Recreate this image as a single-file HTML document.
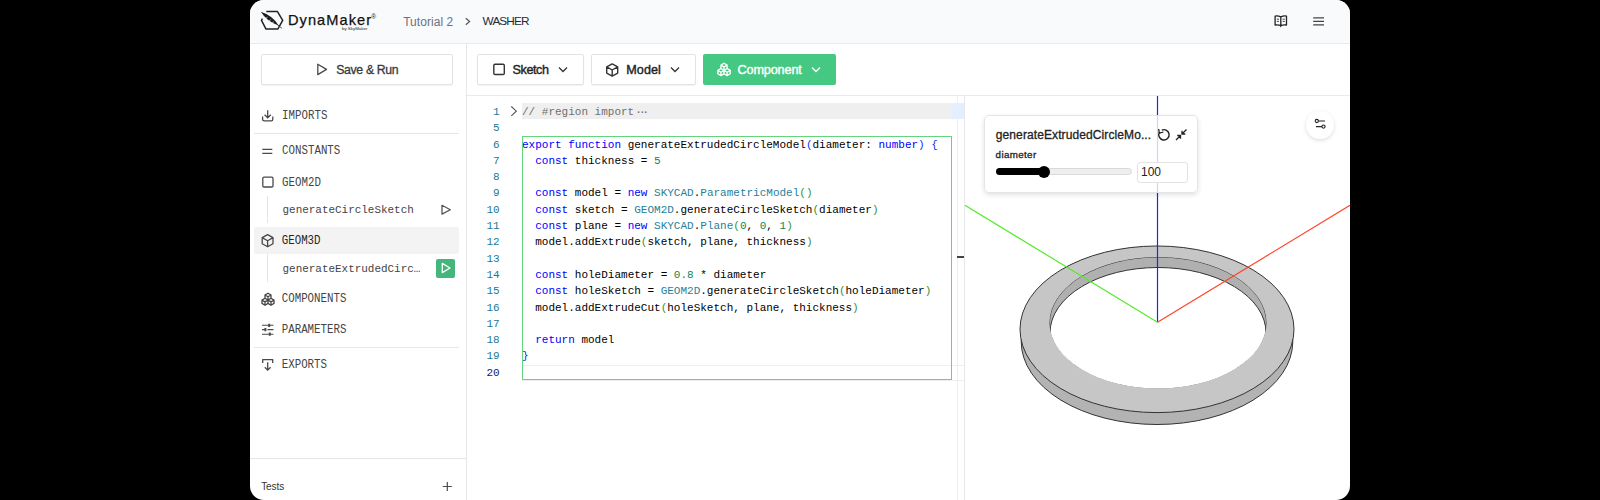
<!DOCTYPE html>
<html><head><meta charset="utf-8">
<style>
*{box-sizing:border-box;margin:0;padding:0}
html,body{width:1600px;height:500px;overflow:hidden;background:#000}
body{font-family:"Liberation Sans",sans-serif;position:relative}
.a{position:absolute;white-space:pre}
#win{position:absolute;left:250px;top:0;width:1100px;height:500px;border-radius:14px;overflow:hidden;background:#fff}
#c{position:absolute;left:-250px;top:0;width:1600px;height:500px}
.k{color:#0000ff}.t{color:#267f99}.n{color:#098658}.b1{color:#0431fa}.b2{color:#319331}
</style></head><body>
<div id="win"><div id="c">
<div class="a" style="left:250px;top:0px;width:1100px;height:43px;background:#f9fafb"></div>
<div class="a" style="left:250px;top:43px;width:1100px;height:1px;background:#e8eaed"></div>
<svg class="a" style="left:258px;top:8px;" width="28" height="25" viewBox="258 8 28 25">
<path d="M262.4 18.6 L261.5 20.3 L266 29.1 L277.8 29.1 L282.7 20.3 L277.5 11.6 L266.3 11.6" fill="none" stroke="#222" stroke-width="1.5" stroke-linejoin="round"/>
<path d="M260.8 11.8 Q272.3 15.4 278.6 25.4 Q267.2 22 260.8 11.8 Z" fill="#1e1e1e"/>
<path d="M277 24.2 L281.8 28.3" stroke="#333" stroke-width="0.9"/>
<path d="M265.6 18.4 L267.6 17.2 M268.8 20.9 L270.8 19.6 M272 23 L274 21.7" stroke="#f9fafb" stroke-width="0.6"/>
</svg>
<div class="a" style="left:288px;top:12.89px;font-family:'Liberation Sans',sans-serif;font-size:14.6px;line-height:14.6px;color:#111;font-weight:normal;letter-spacing:1.05px;-webkit-text-stroke:0.25px #111;">DynaMaker</div>
<div class="a" style="left:371.3px;top:13.68px;font-family:'Liberation Sans',sans-serif;font-size:6.5px;line-height:6.5px;color:#222;font-weight:normal;letter-spacing:0px;">®</div>
<div class="a" style="left:342px;top:27.06px;font-family:'Liberation Sans',sans-serif;font-size:4.4px;line-height:4.4px;color:#222;font-weight:normal;letter-spacing:0px;">by SkyMaker</div>
<div class="a" style="left:403.2px;top:15.80px;font-family:'Liberation Sans',sans-serif;font-size:12px;line-height:12px;color:#6b7280;font-weight:normal;letter-spacing:0.05px;">Tutorial 2</div>
<svg class="a" style="left:462px;top:15px;" width="12" height="13" viewBox="462 15 12 13"><path d="M465.8 18.3 L469.6 21.5 L465.8 24.7" fill="none" stroke="#555" stroke-width="1.2"/></svg>
<div class="a" style="left:482.6px;top:15.07px;font-family:'Liberation Sans',sans-serif;font-size:11.8px;line-height:11.8px;color:#1f2937;font-weight:normal;letter-spacing:-0.9px;padding-top:0.5px;">WASHER</div>
<svg class="a" style="left:1270px;top:12px;" width="22" height="18" viewBox="1270 12 22 18">
<path d="M1280.8 16.9 Q1278 15.6 1275.1 16.1 V25 Q1278 24.6 1280.8 25.4 Q1283.6 24.6 1286.5 25 V16.1 Q1283.6 15.6 1280.8 16.9 Z M1280.8 16.9 V25.4" fill="none" stroke="#222" stroke-width="1.3" stroke-linejoin="round"/>
<path d="M1276.8 19.2h2.2M1276.8 21.4h2.2M1282.6 19.2h2.2M1282.6 21.4h2.2" stroke="#333" stroke-width="0.9"/>
<path d="M1279.6 25.2 L1280.8 27.6 L1282 25.2 Z" fill="#222"/>
</svg>
<svg class="a" style="left:1308px;top:12px;" width="22" height="18" viewBox="1308 12 22 18"><path d="M1313.2 17.9h10.8M1313.2 21.4h10.8M1313.2 24.9h10.8" stroke="#444" stroke-width="1.4"/></svg>
<div class="a" style="left:466px;top:44px;width:1px;height:456px;background:#e5e7ea"></div>
<div class="a" style="left:261px;top:54px;width:192px;height:31px;border:1px solid #e1e3e6;border-radius:2px;background:#fff;box-shadow:0 1px 1px rgba(0,0,0,0.05)"></div>
<svg class="a" style="left:314px;top:60px;" width="16" height="18" viewBox="314 60 16 18"><path d="M317.8 64.2 L326.5 69.4 L317.8 74.6 Z" fill="none" stroke="#4a4a4a" stroke-width="1.3" stroke-linejoin="round"/></svg>
<div class="a" style="left:336.2px;top:64.05px;font-family:'Liberation Sans',sans-serif;font-size:12.3px;line-height:12.3px;color:#3a3a3a;font-weight:normal;letter-spacing:-0.35px;-webkit-text-stroke:0.3px #3a3a3a;">Save &amp; Run</div>
<svg class="a" style="left:259px;top:107px;" width="18" height="17" viewBox="259 107 18 17"><path d="M262.6 116.5 V119.3 Q262.6 120.9 264.2 120.9 H271.2 Q272.8 120.9 272.8 119.3 V116.5" fill="none" stroke="#484848" stroke-width="1.3"/><path d="M267.7 110.3 V117.8 M264.6 114.8 L267.7 117.8 L270.8 114.8" fill="none" stroke="#484848" stroke-width="1.3"/></svg>
<div class="a" style="left:282px;top:111.40px;font-family:'Liberation Mono',monospace;font-size:10.8px;line-height:10.8px;color:#444;font-weight:normal;letter-spacing:0px;transform:scaleY(1.13);transform-origin:0 78%;">IMPORTS</div>
<div class="a" style="left:254px;top:133px;width:205px;height:1px;background:#e5e7ea"></div>
<svg class="a" style="left:259px;top:145px;" width="18" height="12" viewBox="259 145 18 12"><path d="M262.3 149.3h10M262.3 153.3h10" stroke="#4a4a4a" stroke-width="1.3"/></svg>
<div class="a" style="left:282px;top:146.10px;font-family:'Liberation Mono',monospace;font-size:10.8px;line-height:10.8px;color:#444;font-weight:normal;letter-spacing:0px;transform:scaleY(1.13);transform-origin:0 78%;">CONSTANTS</div>
<svg class="a" style="left:259px;top:173px;" width="18" height="18" viewBox="259 173 18 18"><rect x="262.8" y="177.2" width="10.2" height="9.8" rx="1.2" fill="none" stroke="#4a4a4a" stroke-width="1.3"/></svg>
<div class="a" style="left:282px;top:177.50px;font-family:'Liberation Mono',monospace;font-size:10.8px;line-height:10.8px;color:#444;font-weight:normal;letter-spacing:0px;transform:scaleY(1.13);transform-origin:0 78%;">GEOM2D</div>
<div class="a" style="left:266.5px;top:196px;width:1.0px;height:27px;background:#e3e5e8"></div>
<div class="a" style="left:282.5px;top:204.69px;font-family:'Liberation Mono',monospace;font-size:10.95px;line-height:10.95px;color:#444;font-weight:normal;letter-spacing:0px;">generateCircleSketch</div>
<svg class="a" style="left:438px;top:200px;" width="17" height="19" viewBox="438 200 17 19"><path d="M442 205.3 L450.3 209.7 L442 214.1 Z" fill="none" stroke="#555" stroke-width="1.3" stroke-linejoin="round"/></svg>
<div class="a" style="left:254.4px;top:226.8px;width:204.6px;height:27.19999999999999px;background:#f3f3f4;border-radius:2px"></div>
<svg class="a" style="left:259px;top:231px;" width="18" height="19" viewBox="259 231 18 19"><path d="M267.6 234.6 L273 237.6 V243.8 L267.6 246.8 L262.2 243.8 V237.6 Z M262.2 237.6 L267.6 240.7 L273 237.6 M267.6 240.7 V246.8" fill="none" stroke="#484848" stroke-width="1.3" stroke-linejoin="round"/></svg>
<div class="a" style="left:281.7px;top:236.20px;font-family:'Liberation Mono',monospace;font-size:10.8px;line-height:10.8px;color:#262626;font-weight:normal;letter-spacing:0px;transform:scaleY(1.13);transform-origin:0 78%;">GEOM3D</div>
<div class="a" style="left:266.5px;top:254px;width:1.0px;height:28px;background:#e3e5e8"></div>
<div class="a" style="left:282.5px;top:264.19px;font-family:'Liberation Mono',monospace;font-size:10.95px;line-height:10.95px;color:#444;font-weight:normal;letter-spacing:0px;">generateExtrudedCirc…</div>
<div class="a" style="left:436px;top:258.5px;width:19px;height:19.0px;background:#43b77b;border-radius:2px"></div>
<svg class="a" style="left:436px;top:258px;" width="19" height="20" viewBox="436 258 19 20"><path d="M442.3 263.4 L450 268 L442.3 272.6 Z" fill="none" stroke="#fff" stroke-width="1.3" stroke-linejoin="round"/></svg>
<svg class="a" style="left:258px;top:289px;" width="20" height="19" viewBox="258 289 20 19"><g transform="translate(260.8,292) scale(0.6)" stroke="#484848" stroke-width="2.2"><path d="M7 16.5l-5 -3l5 -3l5 3v5.5l-5 3z M2 13.5v5.5l5 3 M7 16.545l5 -3.03 M17 16.5l-5 -3l5 -3l5 3v5.5l-5 3z M12 19l5 3 M17 16.5l5 -3 M12 13.5v-5.5l-5 -3l5 -3l5 3v5.5 M7 5.03v5.455 M12 8l5 -3" fill="none" stroke-linejoin="round" stroke-linecap="round"/></g></svg>
<div class="a" style="left:281.7px;top:294.30px;font-family:'Liberation Mono',monospace;font-size:10.8px;line-height:10.8px;color:#444;font-weight:normal;letter-spacing:0px;transform:scaleY(1.13);transform-origin:0 78%;">COMPONENTS</div>
<svg class="a" style="left:258px;top:320px;" width="20" height="19" viewBox="258 320 20 19"><path d="M262 325.3h11.5M262 329.6h3.5M267.5 329.6h6M262 334.2h11.5" stroke="#4a4a4a" stroke-width="1.1"/><path d="M269.2 323.8v3.2M265.4 328v3.2M269.8 332.6v3.2" stroke="#4a4a4a" stroke-width="2"/></svg>
<div class="a" style="left:281.7px;top:324.90px;font-family:'Liberation Mono',monospace;font-size:10.8px;line-height:10.8px;color:#444;font-weight:normal;letter-spacing:0px;transform:scaleY(1.13);transform-origin:0 78%;">PARAMETERS</div>
<div class="a" style="left:254px;top:347px;width:205px;height:1px;background:#e5e7ea"></div>
<svg class="a" style="left:258px;top:355px;" width="20" height="19" viewBox="258 355 20 19"><path d="M262.7 363 V359.6 H272.7 V363" fill="none" stroke="#484848" stroke-width="1.3" stroke-linejoin="round"/><path d="M267.7 362.3 V370.2 M264.8 367.3 L267.7 370.2 L270.6 367.3" fill="none" stroke="#484848" stroke-width="1.3"/></svg>
<div class="a" style="left:281.7px;top:360.10px;font-family:'Liberation Mono',monospace;font-size:10.8px;line-height:10.8px;color:#444;font-weight:normal;letter-spacing:0px;transform:scaleY(1.13);transform-origin:0 78%;">EXPORTS</div>
<div class="a" style="left:250px;top:458px;width:216px;height:1px;background:#e5e7ea"></div>
<div class="a" style="left:261.2px;top:482.30px;font-family:'Liberation Sans',sans-serif;font-size:10px;line-height:10px;color:#333;font-weight:normal;letter-spacing:-0.1px;">Tests</div>
<svg class="a" style="left:440px;top:479px;" width="15" height="15" viewBox="440 479 15 15"><path d="M447.3 482 V491 M442.8 486.5 H451.8" stroke="#4a4a4a" stroke-width="1.2"/></svg>
<div class="a" style="left:467px;top:95px;width:883px;height:1px;background:#e8eaed"></div>
<div class="a" style="left:477px;top:54px;width:106.5px;height:30.5px;border:1px solid #e1e3e6;border-radius:2px;background:#fff;box-shadow:0 1px 1px rgba(0,0,0,0.05)"></div>
<svg class="a" style="left:490px;top:61px;" width="18" height="18" viewBox="490 61 18 18"><rect x="493.8" y="64.3" width="10.5" height="10.2" rx="1.2" fill="none" stroke="#333" stroke-width="1.4"/></svg>
<div class="a" style="left:512.5px;top:63.59px;font-family:'Liberation Sans',sans-serif;font-size:12.6px;line-height:12.6px;color:#222;font-weight:normal;letter-spacing:-0.4px;-webkit-text-stroke:0.4px #222;">Sketch</div>
<svg class="a" style="left:555px;top:63px;" width="16" height="13" viewBox="555 63 16 13"><path d="M559 67.5 L563 71.5 L567 67.5" fill="none" stroke="#333" stroke-width="1.3"/></svg>
<div class="a" style="left:591px;top:54px;width:105px;height:30.5px;border:1px solid #e1e3e6;border-radius:2px;background:#fff;box-shadow:0 1px 1px rgba(0,0,0,0.05)"></div>
<svg class="a" style="left:604px;top:61px;" width="17" height="18" viewBox="604 61 17 18"><path d="M612.2 63.9 L617.7 66.9 V73.1 L612.2 76.1 L606.7 73.1 V66.9 Z M606.7 66.9 L612.2 70 L617.7 66.9 M612.2 70 V76.1" fill="none" stroke="#333" stroke-width="1.4" stroke-linejoin="round"/></svg>
<div class="a" style="left:626.2px;top:63.59px;font-family:'Liberation Sans',sans-serif;font-size:12.6px;line-height:12.6px;color:#222;font-weight:normal;letter-spacing:0.1px;-webkit-text-stroke:0.4px #222;">Model</div>
<svg class="a" style="left:667px;top:63px;" width="16" height="13" viewBox="667 63 16 13"><path d="M671 67.5 L675 71.5 L679 67.5" fill="none" stroke="#333" stroke-width="1.3"/></svg>
<div class="a" style="left:703px;top:54.3px;width:133.29999999999995px;height:30.700000000000003px;background:#45c982;border-radius:2px"></div>
<svg class="a" style="left:714px;top:59px;" width="20" height="20" viewBox="714 59 20 20"><g transform="translate(716.6,62) scale(0.62)" stroke="#fff" stroke-width="2.2"><path d="M7 16.5l-5 -3l5 -3l5 3v5.5l-5 3z M2 13.5v5.5l5 3 M7 16.545l5 -3.03 M17 16.5l-5 -3l5 -3l5 3v5.5l-5 3z M12 19l5 3 M17 16.5l5 -3 M12 13.5v-5.5l-5 -3l5 -3l5 3v5.5 M7 5.03v5.455 M12 8l5 -3" fill="none" stroke-linejoin="round" stroke-linecap="round"/></g></svg>
<div class="a" style="left:737.5px;top:63.59px;font-family:'Liberation Sans',sans-serif;font-size:12.6px;line-height:12.6px;color:#fff;font-weight:normal;letter-spacing:-0.1px;-webkit-text-stroke:0.4px #fff;">Component</div>
<svg class="a" style="left:808px;top:63px;" width="16" height="13" viewBox="808 63 16 13"><path d="M812 67.5 L816 71.5 L820 67.5" fill="none" stroke="#fff" stroke-width="1.3"/></svg>
<div class="a" style="left:522px;top:103px;width:430px;height:16px;background:#efefef"></div>
<div class="a" style="left:952px;top:103px;width:12px;height:16px;background:#e3efff"></div>
<div class="a" style="left:957px;top:96px;width:1px;height:404px;background:#efefef"></div>
<div class="a" style="left:964px;top:96px;width:1px;height:404px;background:#e5e7ea"></div>
<div class="a" style="left:957px;top:256px;width:7px;height:2px;background:#444"></div>
<div class="a" style="left:522px;top:365px;width:442px;height:1px;background:#eeeeee"></div>
<div class="a" style="left:522px;top:379.5px;width:442px;height:1.0px;background:#eeeeee"></div>
<svg class="a" style="left:507px;top:103px;" width="13" height="17" viewBox="507 103 13 17"><path d="M511.3 106.5 L516.3 111.2 L511.3 115.9" fill="none" stroke="#555" stroke-width="1.1"/></svg>
<div class="a" style="left:493.0px;top:106.95px;font-family:'Liberation Mono',monospace;font-size:11px;line-height:11px;color:#237893;font-weight:normal;letter-spacing:0px;">1</div>
<div class="a" style="left:522px;top:106.95px;font-family:'Liberation Mono',monospace;font-size:11px;line-height:11px;color:#000;font-weight:normal;letter-spacing:0px;"><span style="color:#707070">// #region import</span><span style="color:#666;letter-spacing:-2.9px;position:relative;left:1px">···</span></div>
<div class="a" style="left:493.0px;top:123.25px;font-family:'Liberation Mono',monospace;font-size:11px;line-height:11px;color:#237893;font-weight:normal;letter-spacing:0px;">5</div>
<div class="a" style="left:493.0px;top:139.55px;font-family:'Liberation Mono',monospace;font-size:11px;line-height:11px;color:#237893;font-weight:normal;letter-spacing:0px;">6</div>
<div class="a" style="left:522px;top:139.55px;font-family:'Liberation Mono',monospace;font-size:11px;line-height:11px;color:#000;font-weight:normal;letter-spacing:0px;"><span class="k">export</span> <span class="k">function</span> generateExtrudedCircleModel<span class="b1">(</span>diameter: <span class="k">number</span><span class="b1">)</span> <span class="b1">{</span></div>
<div class="a" style="left:493.0px;top:155.85px;font-family:'Liberation Mono',monospace;font-size:11px;line-height:11px;color:#237893;font-weight:normal;letter-spacing:0px;">7</div>
<div class="a" style="left:522px;top:155.85px;font-family:'Liberation Mono',monospace;font-size:11px;line-height:11px;color:#000;font-weight:normal;letter-spacing:0px;">  <span class="k">const</span> thickness = <span class="n">5</span></div>
<div class="a" style="left:493.0px;top:172.15px;font-family:'Liberation Mono',monospace;font-size:11px;line-height:11px;color:#237893;font-weight:normal;letter-spacing:0px;">8</div>
<div class="a" style="left:493.0px;top:188.45px;font-family:'Liberation Mono',monospace;font-size:11px;line-height:11px;color:#237893;font-weight:normal;letter-spacing:0px;">9</div>
<div class="a" style="left:522px;top:188.45px;font-family:'Liberation Mono',monospace;font-size:11px;line-height:11px;color:#000;font-weight:normal;letter-spacing:0px;">  <span class="k">const</span> model = <span class="k">new</span> <span class="t">SKYCAD</span>.<span class="t">ParametricModel</span><span class="b2">()</span></div>
<div class="a" style="left:486.40000000000003px;top:204.75px;font-family:'Liberation Mono',monospace;font-size:11px;line-height:11px;color:#237893;font-weight:normal;letter-spacing:0px;">10</div>
<div class="a" style="left:522px;top:204.75px;font-family:'Liberation Mono',monospace;font-size:11px;line-height:11px;color:#000;font-weight:normal;letter-spacing:0px;">  <span class="k">const</span> sketch = <span class="t">GEOM2D</span>.generateCircleSketch<span class="b2">(</span>diameter<span class="b2">)</span></div>
<div class="a" style="left:486.40000000000003px;top:221.05px;font-family:'Liberation Mono',monospace;font-size:11px;line-height:11px;color:#237893;font-weight:normal;letter-spacing:0px;">11</div>
<div class="a" style="left:522px;top:221.05px;font-family:'Liberation Mono',monospace;font-size:11px;line-height:11px;color:#000;font-weight:normal;letter-spacing:0px;">  <span class="k">const</span> plane = <span class="k">new</span> <span class="t">SKYCAD</span>.<span class="t">Plane</span><span class="b2">(</span><span class="n">0</span>, <span class="n">0</span>, <span class="n">1</span><span class="b2">)</span></div>
<div class="a" style="left:486.40000000000003px;top:237.35px;font-family:'Liberation Mono',monospace;font-size:11px;line-height:11px;color:#237893;font-weight:normal;letter-spacing:0px;">12</div>
<div class="a" style="left:522px;top:237.35px;font-family:'Liberation Mono',monospace;font-size:11px;line-height:11px;color:#000;font-weight:normal;letter-spacing:0px;">  model.addExtrude<span class="b2">(</span>sketch, plane, thickness<span class="b2">)</span></div>
<div class="a" style="left:486.40000000000003px;top:253.65px;font-family:'Liberation Mono',monospace;font-size:11px;line-height:11px;color:#237893;font-weight:normal;letter-spacing:0px;">13</div>
<div class="a" style="left:486.40000000000003px;top:269.95px;font-family:'Liberation Mono',monospace;font-size:11px;line-height:11px;color:#237893;font-weight:normal;letter-spacing:0px;">14</div>
<div class="a" style="left:522px;top:269.95px;font-family:'Liberation Mono',monospace;font-size:11px;line-height:11px;color:#000;font-weight:normal;letter-spacing:0px;">  <span class="k">const</span> holeDiameter = <span class="n">0.8</span> * diameter</div>
<div class="a" style="left:486.40000000000003px;top:286.25px;font-family:'Liberation Mono',monospace;font-size:11px;line-height:11px;color:#237893;font-weight:normal;letter-spacing:0px;">15</div>
<div class="a" style="left:522px;top:286.25px;font-family:'Liberation Mono',monospace;font-size:11px;line-height:11px;color:#000;font-weight:normal;letter-spacing:0px;">  <span class="k">const</span> holeSketch = <span class="t">GEOM2D</span>.generateCircleSketch<span class="b2">(</span>holeDiameter<span class="b2">)</span></div>
<div class="a" style="left:486.40000000000003px;top:302.55px;font-family:'Liberation Mono',monospace;font-size:11px;line-height:11px;color:#237893;font-weight:normal;letter-spacing:0px;">16</div>
<div class="a" style="left:522px;top:302.55px;font-family:'Liberation Mono',monospace;font-size:11px;line-height:11px;color:#000;font-weight:normal;letter-spacing:0px;">  model.addExtrudeCut<span class="b2">(</span>holeSketch, plane, thickness<span class="b2">)</span></div>
<div class="a" style="left:486.40000000000003px;top:318.85px;font-family:'Liberation Mono',monospace;font-size:11px;line-height:11px;color:#237893;font-weight:normal;letter-spacing:0px;">17</div>
<div class="a" style="left:486.40000000000003px;top:335.15px;font-family:'Liberation Mono',monospace;font-size:11px;line-height:11px;color:#237893;font-weight:normal;letter-spacing:0px;">18</div>
<div class="a" style="left:522px;top:335.15px;font-family:'Liberation Mono',monospace;font-size:11px;line-height:11px;color:#000;font-weight:normal;letter-spacing:0px;">  <span class="k">return</span> model</div>
<div class="a" style="left:486.40000000000003px;top:351.45px;font-family:'Liberation Mono',monospace;font-size:11px;line-height:11px;color:#237893;font-weight:normal;letter-spacing:0px;">19</div>
<div class="a" style="left:522px;top:351.45px;font-family:'Liberation Mono',monospace;font-size:11px;line-height:11px;color:#000;font-weight:normal;letter-spacing:0px;"><span class="b1">}</span></div>
<div class="a" style="left:486.40000000000003px;top:367.75px;font-family:'Liberation Mono',monospace;font-size:11px;line-height:11px;color:#0b216f;font-weight:normal;letter-spacing:0px;">20</div>
<div class="a" style="left:522px;top:136px;width:429.5px;height:244px;border:1px solid #66d47f"></div>
<svg class="a" style="left:965px;top:96px;" width="385" height="404" viewBox="965 96 385 404">
<defs><clipPath id="hole"><ellipse cx="1158" cy="322.75" rx="108.5" ry="65.75"/></clipPath></defs>
<g stroke="#333" stroke-width="1">
<ellipse cx="1157" cy="341.5" rx="135.8" ry="83" fill="#b3b3b3"/>
<path d="M1020 329.3 A137 83.3 0 0 1 1294 329.3 A137 83.3 0 0 1 1020 329.3 Z M1050 322.75 A108 65.25 0 0 0 1266 322.75 A108 65.25 0 0 0 1050 322.75 Z" fill="#c6c6c6" fill-rule="evenodd"/>
<ellipse cx="1158" cy="322.75" rx="108" ry="65.25" fill="#b0b0b0" stroke="none"/>
<ellipse cx="1158" cy="332.75" rx="108" ry="65.25" fill="#fff" clip-path="url(#hole)"/>
</g>
<line x1="1157.5" y1="96" x2="1157.5" y2="322.2" stroke="#2020ff" stroke-width="1.2"/>
<line x1="1157.5" y1="322.2" x2="965" y2="205.3" stroke="#55ea2a" stroke-width="1.2"/>
<line x1="1157.5" y1="322.2" x2="1350" y2="205.3" stroke="#ff4428" stroke-width="1.2"/>
</svg>
<div class="a" style="left:984.3px;top:115px;width:213.70000000000005px;height:78.30000000000001px;background:rgba(255,255,255,0.80);border:1px solid #e2e4e8;border-radius:5px;box-shadow:0 2px 5px rgba(0,0,0,0.12)"></div>
<div class="a" style="left:995.8px;top:128.60px;font-family:'Liberation Sans',sans-serif;font-size:12px;line-height:12px;color:#222;font-weight:normal;letter-spacing:0.1px;-webkit-text-stroke:0.3px #222;">generateExtrudedCircleMo...</div>
<svg class="a" style="left:1154px;top:124px;" width="38" height="22" viewBox="1154 124 38 22">
<path d="M1159.3 132.5 A5.2 5.2 0 1 0 1161.8 130.1" fill="none" stroke="#222" stroke-width="1.4"/>
<path d="M1158.6 129 L1159.4 133.2 L1163.4 132" fill="none" stroke="#222" stroke-width="1.3"/>
<path d="M1176 140 L1180.5 135.5 M1177.2 135.5 H1180.5 V138.8 M1186.5 129.5 L1182 134 M1182 130.7 V134 H1185.3" fill="none" stroke="#222" stroke-width="1.3"/>
</svg>
<div class="a" style="left:995.6px;top:150.07px;font-family:'Liberation Sans',sans-serif;font-size:9.8px;line-height:9.8px;color:#222;font-weight:normal;letter-spacing:0.35px;-webkit-text-stroke:0.3px #222;">diameter</div>
<div class="a" style="left:996px;top:168.2px;width:136px;height:6.600000000000023px;background:#eeeeee;border:1px solid #d9d9d9;border-radius:4px"></div>
<div class="a" style="left:996px;top:168.2px;width:50px;height:6.600000000000023px;background:#000;border-radius:4px"></div>
<div class="a" style="left:1037.5px;top:165.5px;width:12.2px;height:12.2px;border-radius:6.1px;background:#000"></div>
<div class="a" style="left:1136.5px;top:161.5px;width:51.5px;height:21.0px;background:#fff;border:1px solid #e3e3e3;border-radius:3px"></div>
<div class="a" style="left:1141px;top:166.10px;font-family:'Liberation Sans',sans-serif;font-size:12px;line-height:12px;color:#222;font-weight:normal;letter-spacing:0px;">100</div>
<div class="a" style="left:1306px;top:110.5px;width:28px;height:28px;border-radius:14px;background:#fff;box-shadow:0 1.5px 4px rgba(0,0,0,0.13)"></div>
<svg class="a" style="left:1310px;top:113px;" width="20" height="20" viewBox="1310 113 20 20"><g fill="none" stroke="#222" stroke-width="1.1"><circle cx="1316.8" cy="121" r="1.6"/><circle cx="1323.5" cy="126.6" r="1.6"/><path d="M1318.4 121 H1325 M1316 126.6 H1321.9"/></g></svg>
</div></div>
</body></html>
